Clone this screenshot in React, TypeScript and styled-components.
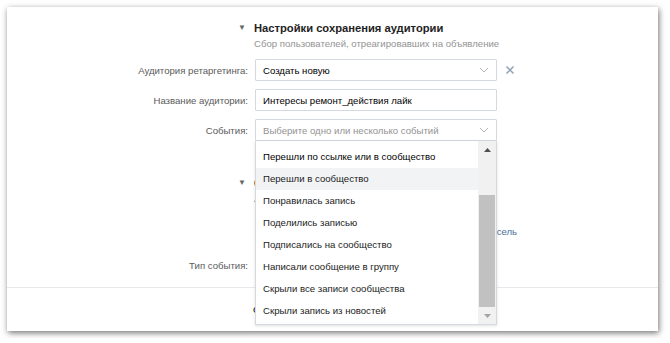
import styled, { createGlobalStyle } from "styled-components";

const GlobalStyle = createGlobalStyle`
  html, body {
    margin: 0;
    padding: 0;
    background: #fff;
  }
  body {
    font-family: "Liberation Sans", Arial, sans-serif;
    font-size: 9.6px;
    color: #000;
  }
`;

const Card = styled.div`
  margin: 7px;
  width: 651px;
  height: 324px;
  background: #fff;
  box-shadow: 1px 2px 6px rgba(0, 0, 0, 0.55);
  display: flex;
  flex-direction: column;
`;

const Body = styled.div`
  height: 281px;
  box-sizing: border-box;
  padding-top: 13px;
  border-bottom: 1px solid #e7e8ec;
`;

const Form = styled.div`
  display: grid;
  grid-template-columns: 241px 242px;
  column-gap: 7px;
  align-items: center;
`;

const Arrow = styled.div`
  justify-self: end;
  padding-right: 2px;
  font-size: 8px;
  color: #656565;
  line-height: 16px;
`;

const Title = styled.div`
  font-weight: bold;
  font-size: 11.2px;
  line-height: 16px;
  color: #222;
  margin-left: -1px;
  white-space: nowrap;
`;

const Subtitle = styled.div`
  grid-column: 2;
  margin-left: -1px;
  line-height: 14px;
  margin-top: 1px;
  color: #939393;
  white-space: nowrap;
`;

const Label = styled.div<{ $top?: number }>`
  justify-self: end;
  color: #5a5a5a;
  margin-top: ${({ $top }) => $top ?? 8}px;
`;

const Field = styled.div<{ $top?: number }>`
  position: relative;
  margin-top: ${({ $top }) => $top ?? 8}px;
`;

const Box = styled.div<{ $placeholder?: boolean }>`
  box-sizing: border-box;
  height: 22px;
  width: 242px;
  border: 1px solid #d3d9de;
  border-radius: 1px;
  padding: 0 7px;
  display: flex;
  align-items: center;
  justify-content: space-between;
  color: ${({ $placeholder }) => ($placeholder ? "#939393" : "#000")};
  white-space: nowrap;
`;

const Remove = styled.div`
  position: absolute;
  left: 250px;
  top: 6px;
  display: flex;
`;

const Spacer = styled.div<{ $top: number }>`
  margin-top: ${({ $top }) => $top}px;
`;

const Note = styled.div`
  grid-column: 2;
  margin-top: 19px;
  margin-left: 2px;
  line-height: 14px;
  color: #000;
  white-space: nowrap;
`;

const Link = styled.span`
  color: #4a6f9a;
`;

const Footer = styled.div`
  padding: 16px 0 0 246px;
  color: #000;
`;

const Dropdown = styled.div`
  position: absolute;
  top: 100%;
  left: 0;
  z-index: 5;
  box-sizing: border-box;
  width: 242px;
  height: 184px;
  background: #fff;
  border: 1px solid #d3d9de;
  border-top: none;
  box-shadow: 0 1px 3px rgba(0, 0, 0, 0.12);
  display: flex;
`;

const List = styled.div`
  flex: 1;
  padding-top: 5px;
`;

const Item = styled.div<{ $hover?: boolean; $strong?: boolean }>`
  height: 22px;
  line-height: 22px;
  padding-left: 7px;
  white-space: nowrap;
  background: ${({ $hover }) => ($hover ? "#f2f3f5" : "transparent")};
  color: ${({ $strong }) => ($strong ? "#000" : "#222")};
`;

const Scrollbar = styled.div`
  width: 16px;
  background: #f1f1f1;
  display: flex;
  flex-direction: column;
  align-items: center;
  padding: 0 1px;
`;

const ScrollBtn = styled.div<{ $dim?: boolean }>`
  height: 17px;
  display: flex;
  align-items: center;
  justify-content: center;
  flex-shrink: 0;
  & svg {
    fill: ${({ $dim }) => ($dim ? "#a3a3a3" : "#505050")};
  }
`;

const Track = styled.div`
  flex: 1;
  width: 100%;
  display: flex;
  flex-direction: column;
  justify-content: flex-end;
`;

const Thumb = styled.div`
  height: 112px;
  background: #c1c1c1;
`;

const Chevron = () => (
  <svg width="10" height="6" viewBox="0 0 10 6">
    <polyline points="1,1 5,5 9,1" fill="none" stroke="#b3b9c0" strokeWidth="1" />
  </svg>
);

const Cross = () => (
  <svg width="10" height="10" viewBox="0 0 10 10">
    <path d="M1.5 1.5L8.5 8.5M8.5 1.5L1.5 8.5" stroke="#8fa1b4" strokeWidth="1.5" />
  </svg>
);

const Tri = ({ up }: { up?: boolean }) => (
  <svg width="7" height="4" viewBox="0 0 7 4">
    {up ? <polygon points="0,4 3.5,0 7,4" /> : <polygon points="0,0 3.5,4 7,0" />}
  </svg>
);

const events = [
  "Перешли по ссылке или в сообщество",
  "Перешли в сообщество",
  "Понравилась запись",
  "Поделились записью",
  "Подписались на сообщество",
  "Написали сообщение в группу",
  "Скрыли все записи сообщества",
  "Скрыли запись из новостей",
];

export default function App() {
  return (
    <>
      <GlobalStyle />
      <Card>
        <Body>
          <Form>
            <Arrow>▼</Arrow>
            <Title>Настройки сохранения аудитории</Title>
            <Subtitle>Сбор пользователей, отреагировавших на объявление</Subtitle>

            <Label>Аудитория ретаргетинга:</Label>
            <Field>
              <Box>
                Создать новую
                <Chevron />
              </Box>
              <Remove>
                <Cross />
              </Remove>
            </Field>

            <Label>Название аудитории:</Label>
            <Field>
              <Box>Интересы ремонт_действия лайк</Box>
            </Field>

            <Label>События:</Label>
            <Field>
              <Box $placeholder>
                Выберите одно или несколько событий
                <Chevron />
              </Box>
              <Dropdown>
                <List>
                  {events.map((e, i) => (
                    <Item key={e} $hover={i === 1} $strong={i === 0}>
                      {e}
                    </Item>
                  ))}
                </List>
                <Scrollbar>
                  <ScrollBtn>
                    <Tri up />
                  </ScrollBtn>
                  <Track>
                    <Thumb />
                  </Track>
                  <ScrollBtn $dim>
                    <Tri />
                  </ScrollBtn>
                </Scrollbar>
              </Dropdown>
            </Field>

            <Spacer $top={34}>
              <Arrow>▼</Arrow>
            </Spacer>
            <Spacer $top={34}>
              <Title>Сбор аудитории по событиям</Title>
            </Spacer>
            <Subtitle>Аудитория пополняется пользователями</Subtitle>
            <Note>
              Аудиторию с вашего сайта можно собирать через <Link>пиксель</Link>
            </Note>

            <Label $top={15}>Тип события:</Label>
            <Field $top={15}>
              <Box $placeholder>
                Выберите тип
                <Chevron />
              </Box>
            </Field>
          </Form>
        </Body>
        <Footer>Сохранить изменения</Footer>
      </Card>
    </>
  );
}
